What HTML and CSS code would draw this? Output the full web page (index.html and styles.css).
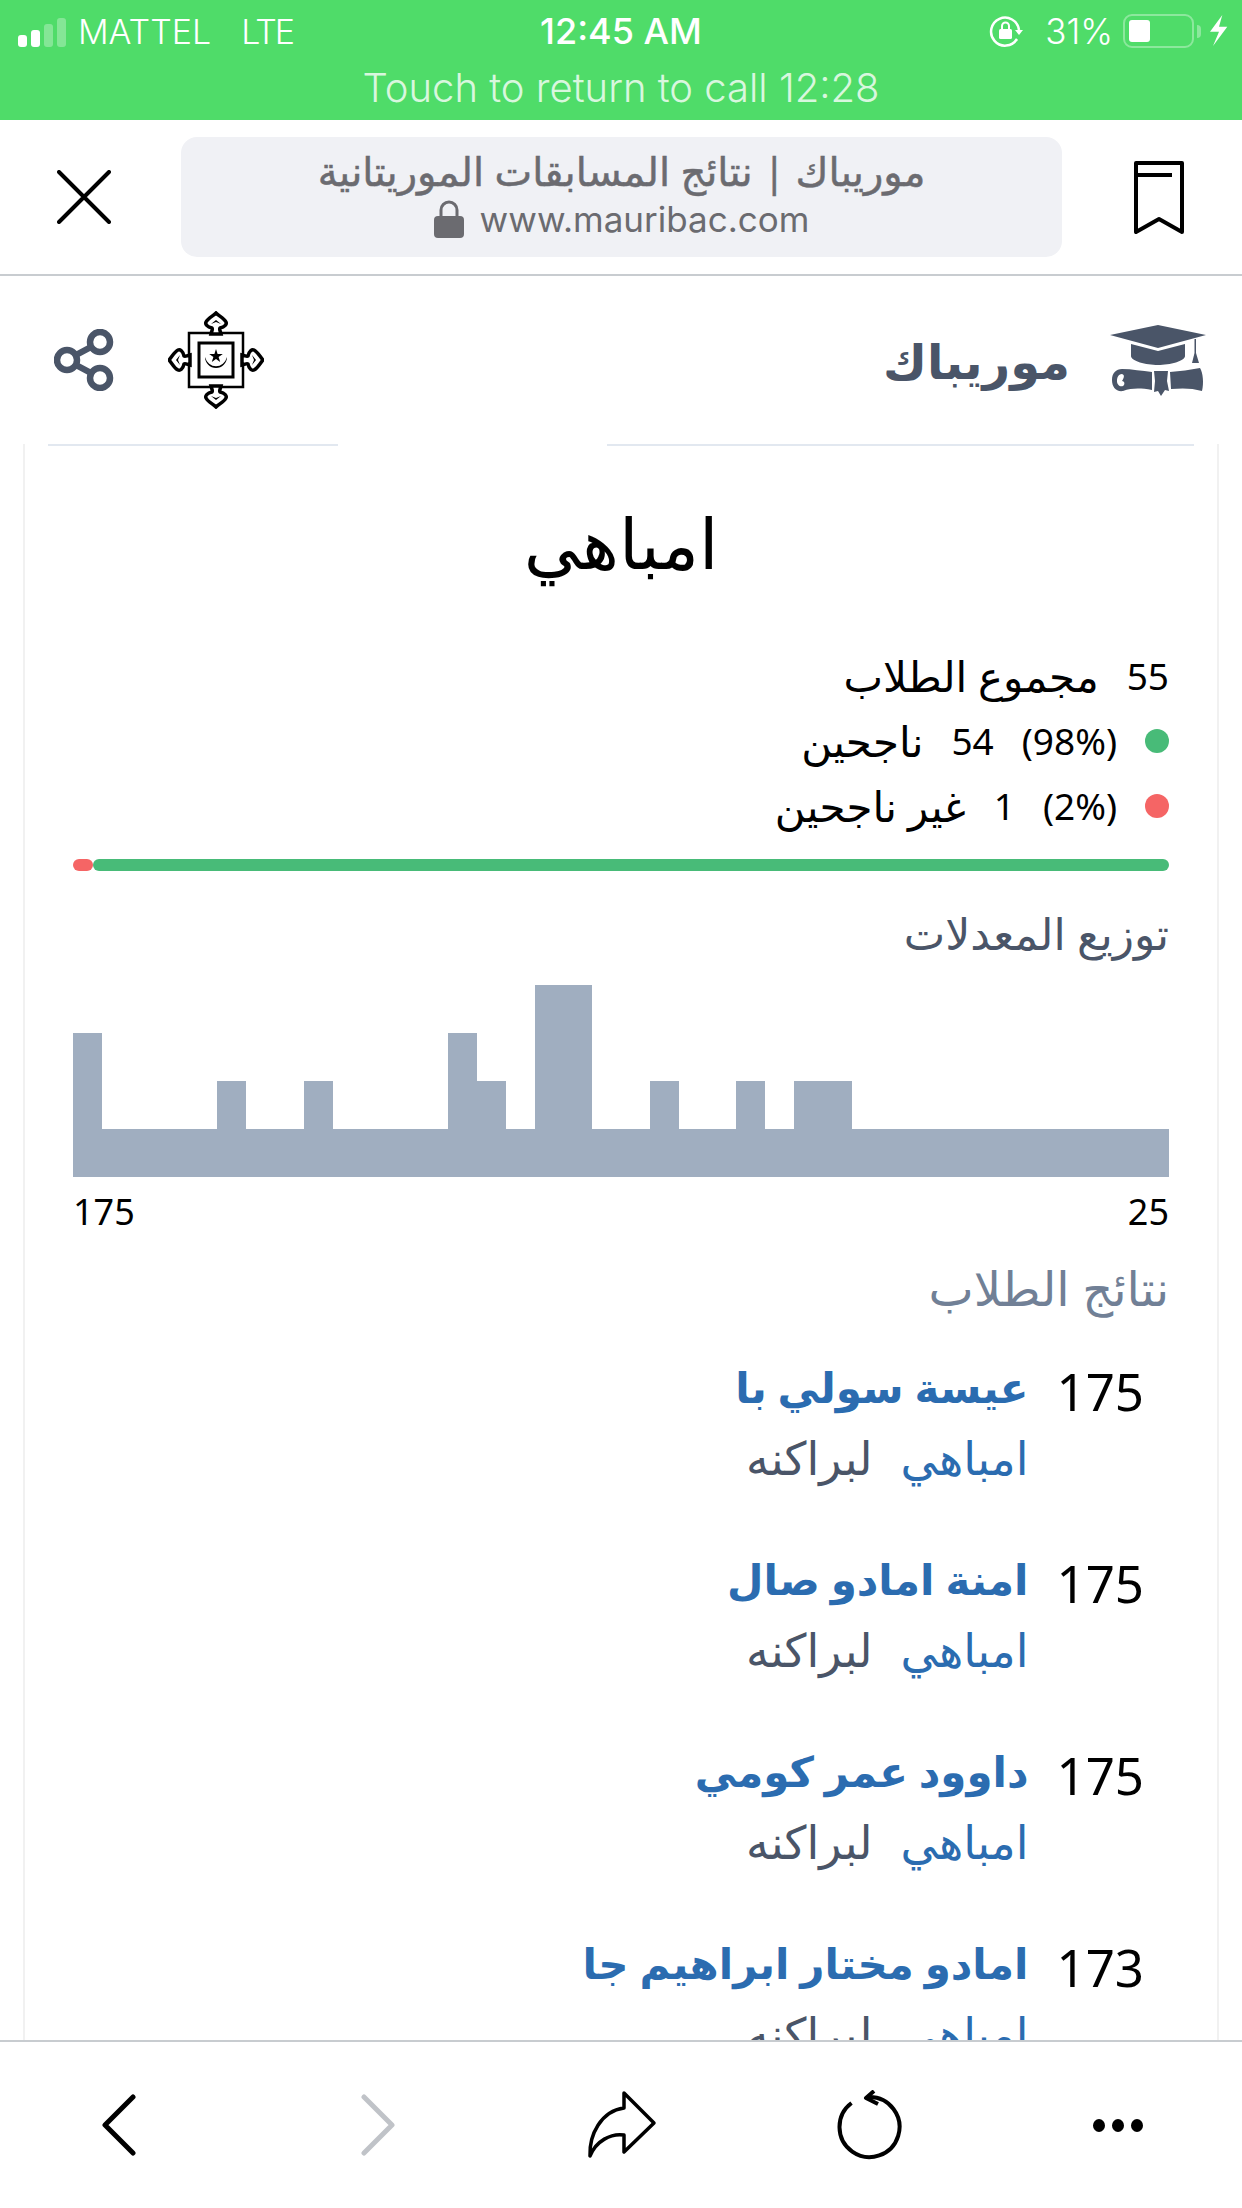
FILE: index.html
```html
<!DOCTYPE html>
<html lang="ar" dir="rtl">
<head>
    <meta charset="UTF-8">
    <meta name="viewport" content="width=device-width, initial-scale=1.0">
    <title>موريباك</title>
    <link rel="stylesheet" href="styles.css">
</head>
<body>
<div class="phone">
    <!-- ios status + call banner -->
    <div class="status" dir="ltr">
        <div class="status-row">
            <div class="status-left">
                <span class="signal">
                    <i class="on s1"></i><i class="on s2"></i><i class="s3"></i><i class="s4"></i>
                </span>
                <span class="carrier">MATTEL</span>
                <span class="network">LTE</span>
            </div>
            <div class="clock">12:45 AM</div>
            <div class="status-right">
                <svg class="rot-lock" width="34" height="32" viewBox="0 0 34 32">
                    <path d="M28 24A14 14 0 1 1 30 15" fill="none" stroke="#fff" stroke-width="2.500"/>
                    <path d="M26 15H34L30 20Z" fill="#fff"/>
                    <rect x="10" y="14" width="13" height="10" rx="1.500" fill="#fff"/>
                    <path d="M13 14V11A3.500 3.500 0 0 1 20 11V14" fill="none" stroke="#fff" stroke-width="2"/>
                </svg>
                <span class="pct">31%</span>
                <span class="battery"><i></i></span>
                <span class="nub"></span>
                <svg class="bolt" width="18" height="32" viewBox="0 0 18 32">
                    <path d="M12.300 0L0 16.700H9L3 31L17.300 11.700H9Z" fill="#fff"/>
                </svg>
            </div>
        </div>
        <div class="call-line">Touch to return to call 12:28</div>
    </div>

    <!-- browser top bar -->
    <div class="browser-bar" dir="ltr">
        <svg class="close-icon" width="54" height="54" viewBox="0 0 54 54">
            <path d="M2 2L52 52M52 2L2 52" fill="none" stroke="#000" stroke-width="4" stroke-linecap="round"/>
        </svg>
        <div class="url-pill">
            <div class="url-title" dir="rtl">موريباك | نتائج المسابقات الموريتانية</div>
            <div class="url-line">
                <svg width="30" height="38" viewBox="0 0 30 38">
                    <path d="M7 18V10A8 8 0 0 1 23 10V18" fill="none" stroke="#6b6b70" stroke-width="3"/>
                    <rect y="16" width="30" height="22" rx="4" fill="#6b6b70"/>
                </svg>
                <span>www.mauribac.com</span>
            </div>
        </div>
        <svg class="bookmark-icon" width="50" height="74" viewBox="0 0 50 74">
            <path d="M2 3H48V72L25 59L2 72Z" fill="none" stroke="#000" stroke-width="4" stroke-linejoin="round"/>
            <path d="M2 15H38" stroke="#000" stroke-width="4"/>
        </svg>
    </div>

    <!-- site header -->
    <div class="site-nav" dir="ltr">
        <div class="nav-left">
            <svg class="share-icon" width="62" height="62" viewBox="0 0 62 62">
                <g fill="none" stroke="#4a5568" stroke-width="6.500">
                    <circle cx="46" cy="13" r="10"/>
                    <circle cx="13" cy="31" r="10"/>
                    <circle cx="46" cy="49" r="10"/>
                    <path d="M22 26L37 18M22 36L37 44"/>
                </g>
            </svg>
            <svg class="emblem" width="96" height="98" viewBox="-48 -49 96 98">
                <defs>
                    <g id="lobe">
                        <path d="M-5-26C-4-30-3-31-4-32C-9-33-11-36-10-38C-8-42-3-44 0-47C3-44 8-42 10-38C11-36 9-33 4-32C3-31 4-30 5-26Z" fill="#fff" stroke="#000" stroke-width="3.500"/>
                        <path d="M-5-36L0-40L5-36L0-38Z" fill="#000"/>
                    </g>
                </defs>
                <rect x="-27" y="-27" width="54" height="54" fill="#fff" stroke="#000" stroke-width="2.500"/>
                <rect x="-17" y="-17" width="34" height="34" fill="#fff" stroke="#000" stroke-width="3"/>
                <use href="#lobe"/>
                <use href="#lobe" transform="rotate(90)"/>
                <use href="#lobe" transform="rotate(180)"/>
                <use href="#lobe" transform="rotate(270)"/>
                <path d="M-11-3A11.500 13 0 0 0 11-3A11 11 0 0 1-11-3Z" fill="#000"/>
                <path d="M0-11L1.600-6H6.800L2.600-3L4.200 2L0-1L-4.200 2L-2.600-3L-6.800-6H-1.600Z" fill="#000"/>
            </svg>
        </div>
        <div class="brand">
            <span class="brand-name" dir="rtl">موريباك</span>
            <svg class="cap-icon" width="96" height="74" viewBox="20 22 96 74">
                <g fill="#4a5568">
                    <path d="M20 34L68 24L116 34L68 47Z"/>
                    <path d="M41 43L68 50L95 43V55C95 60 80 64 68 64C56 64 41 60 41 55Z"/>
                    <path d="M104.500 38H106V52L109 62H102L104.500 52Z"/>
                    <path d="M32 68C42 68 52 70 62 71V89C50 87 42 87 33 90C26 91 22 86 22 79C22 72 26 68 32 68ZM32 73C28 73 27 77 27 80C27 84 30 86 33 85C35 84 35 80 32 80C34 77 35 74 32 73Z" fill-rule="evenodd"/>
                    <path d="M64 70H78L77 80L79 90L75 89L71 95L68 90L64 91L65 80Z"/>
                    <path d="M80 71C90 70 100 69 110 67C113 72 114 82 112 90C102 87 92 87 81 88Z"/>
                </g>
            </svg>
        </div>
    </div>

    <!-- page content, cut by the bottom toolbar -->
    <div class="content">
        <div class="card">
            <div class="card-top" dir="ltr"><i class="seg-a"></i><i class="seg-b"></i></div>
            <h1 class="school">امباهي</h1>

            <div class="stat-row">
                <span class="num">55</span>
                <span>مجموع الطلاب</span>
            </div>
            <div class="stat-row">
                <i class="dot green"></i>
                <span class="num" dir="ltr">(98%)</span>
                <span class="num">54</span>
                <span>ناجحين</span>
            </div>
            <div class="stat-row">
                <i class="dot red"></i>
                <span class="num" dir="ltr">(2%)</span>
                <span class="num">1</span>
                <span>غير ناجحين</span>
            </div>

            <div class="progress" dir="ltr"><i class="p-red"></i><i class="p-green"></i></div>

            <div class="chart-title">توزيع المعدلات</div>
            <div class="chart" dir="ltr">
                <i class="l3"></i><i class="l1"></i><i class="l1"></i><i class="l1"></i><i class="l1"></i>
                <i class="l2"></i><i class="l1"></i><i class="l1"></i><i class="l2"></i><i class="l1"></i>
                <i class="l1"></i><i class="l1"></i><i class="l1"></i><i class="l3"></i><i class="l2"></i>
                <i class="l1"></i><i class="l4"></i><i class="l4"></i><i class="l1"></i><i class="l1"></i>
                <i class="l2"></i><i class="l1"></i><i class="l1"></i><i class="l2"></i><i class="l1"></i>
                <i class="l2"></i><i class="l2"></i><i class="l1"></i><i class="l1"></i><i class="l1"></i>
                <i class="l1"></i><i class="l1"></i><i class="l1"></i><i class="l1"></i><i class="l1"></i>
                <i class="l1"></i><i class="l1"></i><i class="l1"></i>
            </div>
            <div class="chart-labels" dir="ltr"><span>175</span><span>25</span></div>

            <div class="results-title">نتائج الطلاب</div>

            <div class="student">
                <div class="score">175</div>
                <div>
                    <div class="name">عيسة سولي با</div>
                    <div class="place"><span class="town">امباهي</span><span class="region">لبراكنه</span></div>
                </div>
            </div>
            <div class="student">
                <div class="score">175</div>
                <div>
                    <div class="name">امنة امادو صال</div>
                    <div class="place"><span class="town">امباهي</span><span class="region">لبراكنه</span></div>
                </div>
            </div>
            <div class="student">
                <div class="score">175</div>
                <div>
                    <div class="name">داوود عمر كومي</div>
                    <div class="place"><span class="town">امباهي</span><span class="region">لبراكنه</span></div>
                </div>
            </div>
            <div class="student">
                <div class="score">173</div>
                <div>
                    <div class="name">امادو مختار ابراهيم جا</div>
                    <div class="place"><span class="town">امباهي</span><span class="region">لبراكنه</span></div>
                </div>
            </div>
        </div>
    </div>

    <!-- browser bottom toolbar -->
    <div class="toolbar" dir="ltr">
        <svg class="tool-back" width="34" height="62" viewBox="0 0 34 62">
            <path d="M31 3L3 31L31 59" fill="none" stroke="#000" stroke-width="5" stroke-linecap="round" stroke-linejoin="round"/>
        </svg>
        <svg class="tool-forward" width="34" height="62" viewBox="0 0 34 62">
            <path d="M3 3L31 31L3 59" fill="none" stroke="#c0c3c8" stroke-width="5" stroke-linecap="round" stroke-linejoin="round"/>
        </svg>
        <svg class="tool-share" width="70" height="68" viewBox="0 0 70 68">
            <path d="M37 2L67 32L37 61V44C24 42 9 50 3 65C2 44 14 20 37 17Z" fill="none" stroke="#000" stroke-width="3.500" stroke-linejoin="round"/>
        </svg>
        <svg class="tool-reload" width="66" height="70" viewBox="0 0 66 70">
            <path d="M32 7A30 30 0 1 1 14.500 13" fill="none" stroke="#000" stroke-width="4"/>
            <path d="M37 1L29 8L41 14" fill="none" stroke="#000" stroke-width="4" stroke-linejoin="round"/>
        </svg>
        <div class="tool-more"><i></i><i></i><i></i></div>
    </div>
</div>
</body>
</html>
```

FILE: styles.css
```css
* {
    box-sizing: border-box;
}
html, body {
    margin: 0;
    padding: 0;
    background-color: #fff;
}
.phone {
    width: 1242px;
    height: 2208px;
    display: flex;
    flex-direction: column;
    overflow: hidden;
    font-family: "Noto Sans", "DejaVu Sans", sans-serif;
}

/* status bar */
.status {
    height: 120px;
    flex: none;
    background-color: #4fdc69;
    color: #fff;
    font-family: Inter, "Liberation Sans", sans-serif;
}
.status-row {
    height: 62px;
    display: grid;
    grid-template-columns: 1fr auto 1fr;
    align-items: center;
}
.status-left {
    display: flex;
    align-items: center;
    padding-left: 18px;
}
.signal {
    display: flex;
    align-items: flex-end;
    gap: 4px;
    height: 29px;
    margin-top: 2px;
    margin-right: 12px;
}
.signal i {
    width: 9px;
    border-radius: 3px;
    background-color: rgba(255,255,255,0.3);
}
.signal .on {
    background-color: #fff;
}
.s1 { height: 12px; }
.s2 { height: 17px; }
.s3 { height: 23px; }
.s4 { height: 29px; }
.carrier {
    font-size: 34px;
    font-weight: 300;
    margin-right: 30px;
}
.network {
    font-size: 34px;
    font-weight: 300;
    letter-spacing: -2px;
}
.clock {
    font-size: 36px;
    font-weight: 500;
}
.status-right {
    display: flex;
    align-items: center;
    justify-content: flex-end;
    padding-right: 14px;
}
.pct {
    font-size: 35px;
    font-weight: 300;
    margin-left: 22px;
    margin-right: 10px;
}
.battery {
    width: 71px;
    height: 34px;
    padding: 4px;
    border: 2.5px solid rgba(255,255,255,0.35);
    border-radius: 9px;
}
.battery i {
    display: block;
    width: 21px;
    height: 100%;
    border-radius: 3px;
    background-color: #fff;
}
.nub {
    width: 4px;
    height: 13px;
    margin: 0 9px 0 3px;
    border-radius: 0 4px 4px 0;
    background-color: rgba(255,255,255,0.35);
}
.call-line {
    text-align: center;
    font-size: 40px;
    font-weight: 300;
    line-height: 52px;
    color: rgba(255,255,255,0.8);
}

/* browser bar */
.browser-bar {
    height: 156px;
    flex: none;
    display: flex;
    align-items: center;
    padding: 0 58px 0 57px;
    border-bottom: 2px solid #c8ccd0;
}
.url-pill {
    width: 881px;
    height: 120px;
    margin-left: 70px;
    margin-right: 72px;
    padding-top: 6px;
    border-radius: 16px;
    background-color: #f0f1f5;
    color: #6b6b70;
    text-align: center;
}
.url-title {
    font-size: 40px;
    line-height: 56px;
    -webkit-text-stroke: 0.5px #6b6b70;
}
.url-line {
    display: flex;
    justify-content: center;
    align-items: center;
    gap: 16px;
    font-family: Inter, "Liberation Sans", sans-serif;
    font-size: 35px;
    line-height: 40px;
}

/* site header */
.site-nav {
    height: 168px;
    flex: none;
    display: flex;
    justify-content: space-between;
    align-items: center;
    padding: 0 36px 0 54px;
}
.nav-left {
    display: flex;
    align-items: center;
    gap: 52px;
}
.brand {
    display: flex;
    align-items: center;
    gap: 40px;
}
.brand-name {
    font-size: 48px;
    font-weight: bold;
    color: #4a5568;
}

/* content */
.content {
    flex: 1;
    min-height: 0;
    overflow: hidden;
    padding: 0 23px;
}
.card {
    padding: 0 48px;
    border-left: 2px solid #f1f1f1;
    border-right: 2px solid #f1f1f1;
}
.card-top {
    display: flex;
    justify-content: space-between;
    height: 2px;
    margin: 0 -25px;
}
.seg-a, .seg-b {
    display: block;
    height: 2px;
    background-color: #e2e8f0;
}
.seg-a {
    width: 290px;
}
.seg-b {
    width: 587px;
}
.school {
    height: 100px;
    margin: 46px 0 51px;
    font-size: 70px;
    line-height: 100px;
    font-weight: normal;
    text-align: center;
    color: #000;
}
.stat-row {
    height: 65px;
    display: flex;
    align-items: center;
    gap: 28px;
    font-size: 42px;
    color: #000;
}
.num {
    font-size: 37px;
}
.dot {
    width: 24px;
    height: 24px;
    border-radius: 50%;
}
.green { background-color: #48bb78; }
.red { background-color: #f56565; }
.progress {
    display: flex;
    height: 12px;
    margin-top: 21px;
}
.progress i {
    display: block;
    height: 100%;
    border-radius: 6px;
}
.p-red {
    width: 20px;
    background-color: #f56565;
}
.p-green {
    flex: 1;
    background-color: #48bb78;
}
.chart-title {
    height: 60px;
    margin-top: 32px;
    font-size: 44px;
    line-height: 60px;
    color: #4a5568;
}
.chart {
    display: flex;
    align-items: flex-end;
    height: 192px;
    margin-top: 22px;
}
.chart i {
    flex: 1;
    background-color: #a0aec0;
}
.l1 { height: 25%; }
.l2 { height: 50%; }
.l3 { height: 75%; }
.l4 { height: 100%; }
.chart-labels {
    display: flex;
    justify-content: space-between;
    height: 40px;
    margin-top: 15px;
    font-size: 36px;
    line-height: 40px;
    color: #000;
}
.results-title {
    height: 60px;
    margin-top: 26px;
    font-size: 48px;
    line-height: 60px;
    color: #718096;
}
.student {
    display: flex;
    height: 130px;
    margin-top: 62px;
    padding-right: 25px;
    gap: 28px;
}
.results-title + .student {
    margin-top: 39px;
}
.score {
    font-size: 51px;
    line-height: 68px;
    color: #000;
}
.name {
    height: 60px;
    font-size: 42px;
    font-weight: bold;
    line-height: 60px;
    color: #2b6cb0;
}
.place {
    display: flex;
    gap: 28px;
    height: 60px;
    margin-top: 10px;
    font-size: 46px;
    line-height: 60px;
}
.town { color: #2b6cb0; }
.region { color: #4a5568; }

/* bottom toolbar */
.toolbar {
    height: 168px;
    flex: none;
    display: flex;
    align-items: center;
    padding-left: 102px;
    border-top: 2px solid #c8ccd0;
    background-color: #fff;
}
.tool-forward {
    margin-left: 225px;
}
.tool-share {
    margin-left: 192px;
}
.tool-reload {
    margin-left: 180px;
}
.tool-more {
    display: flex;
    gap: 7px;
    margin-left: 190px;
}
.tool-more i {
    width: 12px;
    height: 13px;
    border-radius: 50%;
    background-color: #000;
}
```
